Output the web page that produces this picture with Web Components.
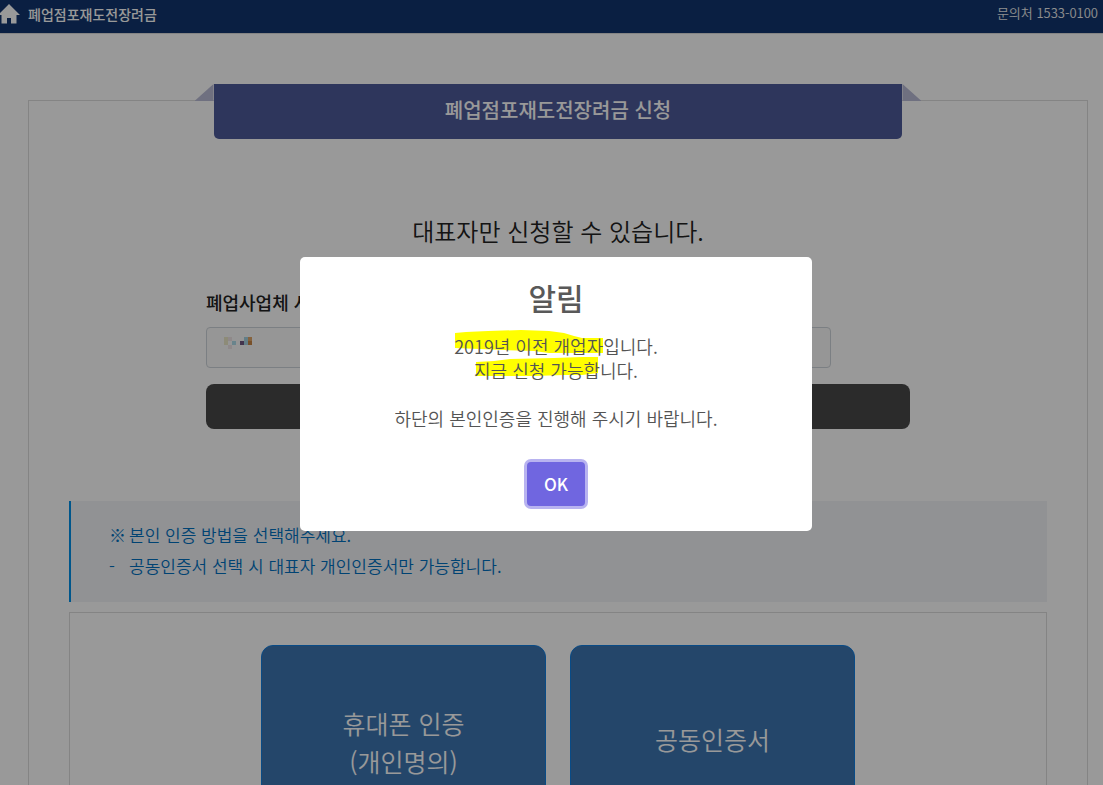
<!DOCTYPE html>
<html lang="ko">
<head>
<meta charset="utf-8">
<title>폐업점포재도전장려금</title>
<style>
html { overflow: hidden; }
body { margin: 0; min-height: 100vh; background: #fff; color: #222; font-family: "Noto Sans CJK KR", "Noto Sans", sans-serif; font-size: 17px; font-weight: 350; }
</style>
</head>
<body>
<grant-page></grant-page>
<alert-dialog heading="알림">
  <highlight-text>2019년 이전 개업자<span slot="rest">입니다.</span></highlight-text>
  <highlight-text variant="second">지금 신청 가능합<span slot="rest">니다.</span></highlight-text>
  <br>
  <div>하단의 본인인증을 진행해 주시기 바랍니다.</div>
</alert-dialog>
<script>
class BaseElement extends HTMLElement {
  constructor() {
    super();
    this.attachShadow({ mode: "open" }).innerHTML = this.template();
  }
}

customElements.define("site-header", class extends BaseElement {
  template() {
    return `<style>
      :host { display: flex; justify-content: space-between; align-items: center; height: 33px; background: #11356e; border-bottom: 1px solid #ddd; padding-right: 5px; color: #fff; }
      a { display: flex; align-items: center; gap: 8px; color: inherit; text-decoration: none; font-size: 14px; font-weight: 500; line-height: 20px; padding-bottom: 6px; }
      svg { display: block; margin-left: -2px; }
      span.contact { font-size: 13px; line-height: 20px; padding-bottom: 8px; color: #eee; }
    </style>
    <a href="#"><svg width="22" height="20" viewBox="0 0 22 20" aria-hidden="true"><path fill="#fff" d="M11 0 22 11H18.500V19.500H13V14H9V19.500H3.500V11H0Z"/></svg><span>폐업점포재도전장려금</span></a>
    <span class="contact">문의처 1533-0100</span>`;
  }
});

customElements.define("ribbon-title", class extends BaseElement {
  template() {
    return `<style>
      :host { display: block; position: relative; margin: -17px auto 0; }
      h1 { margin: 0; background: #4d5a99; color: #fff; border-radius: 0 0 5px 5px; font-size: 20px; font-weight: 500; line-height: 51px; padding-bottom: 4px; text-align: center; }
      i { position: absolute; top: 0; width: 19px; height: 17px; background: #b9bbd5; }
      .l { right: 100%; clip-path: polygon(100% 0, 100% 100%, 0 100%); }
      .r { left: 100%; clip-path: polygon(0 0, 100% 100%, 0 100%); }
    </style><i class="l"></i><i class="r"></i><h1><slot></slot></h1>`;
  }
});

customElements.define("business-form", class extends BaseElement {
  template() {
    return `<style>
      :host { display: block; width: 72%; margin: 0 auto; }
      label { display: block; font-weight: 500; font-size: 18px; line-height: 26px; color: #222; }
      .field { position: relative; width: 625px; max-width: 89%; margin: 12px 0 16px; }
      input { display: block; box-sizing: border-box; width: 100%; height: 41px; border: 1px solid #ced4da; border-radius: 4px; background: #fafafa; padding: 0 12px; font: inherit; }
      svg { position: absolute; left: 18px; top: 10px; }
      button { display: block; width: 100%; height: 45px; border: 0; border-radius: 8px; background: #484848; }
    </style>
    <label for="no">폐업사업체 사</label>
    <div class="field"><input id="no" type="text">
      <svg width="28" height="12" shape-rendering="crispEdges" aria-hidden="true">
        <path fill="#ebe8c8" d="M0 0h4v8H0z"/><path fill="#efe4e6" d="M4 0h4v4H4zM4 8h4v4H4z"/><path fill="#b0dcea" d="M8 4h4v4H8z"/><path fill="#705880" d="M16 4h4v4h-4z"/><path fill="#a5d2e2" d="M20 0h4v8h-4z"/><path fill="#dfa668" d="M24 0h4v4h-4z"/><path fill="#c88545" d="M24 4h4v4h-4z"/>
      </svg>
    </div>
    <button type="button" aria-label="조회"></button>`;
  }
});

customElements.define("notice-box", class extends BaseElement {
  template() {
    return `<style>
      :host { display: block; background: #f2f4f7; border-left: 2px solid #0090e8; color: #0070c0; }
      ul { list-style: none; margin: 0; padding: 18px 38px 21px; font-size: 17px; line-height: 31px; }
      li { display: flex; }
      li span { width: 20px; flex: none; }
    </style>
    <ul><li><span>※</span>본인 인증 방법을 선택해주세요.</li><li><span>-</span>공동인증서 선택 시 대표자 개인인증서만 가능합니다.</li></ul>`;
  }
});

customElements.define("auth-card", class extends BaseElement {
  template() {
    return `<style>
      :host { display: block; flex: 0 1 285px; }
      button { width: 100%; height: 194px; border: 1px solid #0f7de0; border-radius: 12px; background: #3c75b1; color: #fff; font: inherit; font-size: 25px; line-height: 38px; }
      :host([compact]) button { height: 188px; }
    </style><button type="button"><slot></slot></button>`;
  }
});

customElements.define("grant-page", class extends BaseElement {
  template() {
    return `<style>
      :host { display: block; }
      main { margin: 66px 15px 40px 28px; border: 1px solid #ddd; padding: 0 40px 40px; }
      ribbon-title { width: calc((100% + 82px) * 0.65); }
      h2 { margin: 74px 0 40px; text-align: center; font-size: 24px; font-weight: inherit; line-height: 36px; color: #222; }
      notice-box { margin: 72px 0 10px; }
      .cards { display: flex; justify-content: center; gap: 24px; border: 1px solid #ddd; padding: 32px; }
    </style>
    <site-header></site-header>
    <main>
      <ribbon-title>폐업점포재도전장려금 신청</ribbon-title>
      <h2>대표자만 신청할 수 있습니다.</h2>
      <business-form></business-form>
      <notice-box></notice-box>
      <div class="cards"><auth-card>휴대폰 인증<br>(개인명의)</auth-card><auth-card compact>공동인증서</auth-card></div>
    </main>`;
  }
});

customElements.define("highlight-text", class extends BaseElement {
  template() {
    return `<style>
      :host { display: block; }
      .mark { position: relative; display: inline-block; }
      svg { position: absolute; left: 0; top: -5px; z-index: -1; overflow: visible; }
      .b { display: none; }
      :host([variant="second"]) .a { display: none; }
      :host([variant="second"]) .b { display: block; }
    </style><span class="mark"><svg class="a" width="148" height="26" aria-hidden="true"><path fill="#ff0" d="M1 4 12 3 34 2 67 1 95 2 110 4 120 7 128 9H149V24H95L80 22 50 21 1 19Z"/></svg><svg class="b" width="124" height="26" aria-hidden="true"><path fill="#ff0" d="M2 9 20 8 36 6 80 5 108 4H124V20L108 22H90L60 23H2Z"/></svg><slot></slot></span><slot name="rest"></slot>`;
  }
});

customElements.define("alert-dialog", class extends BaseElement {
  template() {
    return `<style>
      :host { position: fixed; inset: 0; display: grid; place-items: center; background: rgba(0,0,0,.4); padding: 3px 0 0 9px; }
      section { box-sizing: border-box; width: 512px; max-width: 100%; background: #fff; border-radius: 5px; color: #545454; text-align: center; padding: 18px 20px 25px; }
      h2 { margin: 0; font-size: 30px; font-weight: 500; line-height: 44px; color: #595959; }
      .body { position: relative; z-index: 0; margin-top: 15px; font-size: 18px; line-height: 24px; }
      button { display: block; margin: 32px auto 0; width: 58px; height: 44px; padding: 0 0 2px; border: 0; border-radius: 4px; background: #7066e0; box-shadow: 0 0 0 3px #b8b3f0; color: #fff; font: inherit; font-size: 17px; font-weight: 500; }
    </style>
    <section role="dialog" aria-modal="true" aria-labelledby="t"><h2 id="t"></h2><div class="body"><slot></slot></div><button type="button">OK</button></section>`;
  }
  connectedCallback() { this.shadowRoot.querySelector("h2").textContent = this.getAttribute("heading"); }
});
</script>
</body>
</html>
